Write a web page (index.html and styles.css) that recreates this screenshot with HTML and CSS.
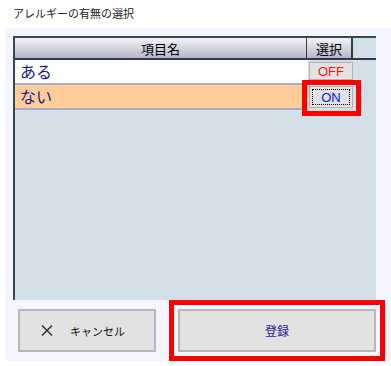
FILE: index.html
```html
<!DOCTYPE html>
<html lang="ja">
<head>
<meta charset="utf-8">
<link rel="stylesheet" href="styles.css">
</head>
<body>
<div class="title">アレルギーの有無の選択</div>
<div class="panel">
  <div class="grid">
    <div class="row head">
      <div class="c1">項目名</div>
      <div class="c2">選択</div>
    </div>
    <div class="row item">
      <div class="c1">ある</div>
      <div class="c2"><span class="tog off">OFF</span></div>
    </div>
    <div class="row item sel">
      <div class="c1">ない</div>
      <div class="c2"><span class="tog on"><span class="focus">ON</span></span></div>
      <div class="mark"></div>
    </div>
  </div>
  <div class="actions">
    <button class="btn cancel">
      <svg class="x" width="12" height="13" viewBox="0 0 12 13"><path d="M1 1.5 L11 11.5 M11 1.5 L1 11.5" stroke="#333" stroke-width="1.6" fill="none"/></svg>
      <span>キャンセル</span>
    </button>
    <div class="hl">
      <button class="btn save">登録</button>
    </div>
  </div>
</div>
</body>
</html>
```

FILE: styles.css
```css
* { box-sizing: border-box; }
body {
  margin: 0;
  background: #ffffff;
  font-family: "Noto Sans CJK JP", "Noto Sans", sans-serif;
  width: 391px;
  height: 366px;
  overflow: hidden;
}
.title {
  height: 28px;
  padding: 5px 0 0 13px;
  font-size: 11px;
  line-height: 16px;
  color: #222;
}
.panel {
  margin-left: 5px;
  width: 386px;
  height: 333px;
  background: #f4f5fd;
  padding: 8px 0 0 8px;
}
.grid {
  width: 363px;
  height: 264px;
  background: #d3e0e7;
  border-left: 2px solid #2f4a5a;
  border-top: 2px solid #2f4a5a;
}
.row {
  display: flex;
  position: relative;
}
.c1 { width: 293px; }
.c2 { width: 45px; }
.head {
  height: 22px;
  border-bottom: 2px solid #2f3a50;
}
.head .c1, .head .c2 {
  background: linear-gradient(#f4f4f8, #b6b6ca);
  text-align: center;
  font-size: 13px;
  line-height: 22px;
  color: #000;
}
.head .c1 { border-right: 1px solid #2f3a50; width: 292px; padding-left: 0; }
.head .c2 { border-right: 2px solid #2f3a50; width: 46px; }
.item { height: 25px; }
.item .c1 {
  background: #ffffff;
  border-bottom: 2px solid #a9abc8;
  font-size: 16px;
  line-height: 23px;
  padding-left: 5px;
  color: #1a1a8a;
}
.sel .c1 { background: #fecc98; }
.item .c2 {
  padding: 1px 0 0 1px;
}
.tog {
  display: flex;
  align-items: center;
  justify-content: center;
  width: 44px;
  height: 22px;
  background: #e2e2e2;
  border: 1px solid #b2b2b2;
  font-family: "Liberation Sans", sans-serif;
  font-size: 13px;
}
.off { color: #ff1010; height: 18px; margin-top: 1px; }
.on { color: #1010ee; padding: 2px; }
.focus {
  width: 100%;
  height: 100%;
  border: 1px dotted #000;
  display: flex;
  align-items: center;
  justify-content: center;
}
.mark {
  position: absolute;
  left: 287px;
  top: -5px;
  width: 59px;
  height: 36px;
  border: 5px solid #ff0000;
}
.actions {
  display: flex;
  align-items: flex-start;
}
.btn {
  font-family: "Noto Sans CJK JP", sans-serif;
  background: #e2e2e2;
  border: 2px solid #b7b7b9;
  height: 43px;
  padding: 0;
  margin: 0;
}
.cancel {
  margin: 9px 0 0 5px;
  width: 138px;
  display: flex;
  align-items: center;
  padding-left: 21px;
  font-size: 11px;
  color: #111;
}
.cancel .x { margin-right: 17px; }
.hl {
  margin-left: 13px;
  border: 5px solid #ff0000;
  padding: 4px;
  background: #f4f5fd;
}
.save {
  display: block;
  width: 198px;
  font-size: 12px;
  color: #1c1c9a;
}
```
